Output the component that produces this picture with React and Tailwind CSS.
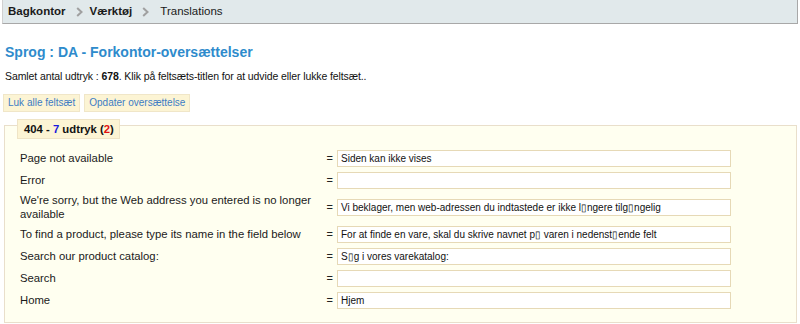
import React from "react";

const Chevron = ({ className }) => (
  <svg width="7" height="10" viewBox="0 0 7 10" className={className}>
    <polyline points="1.2,1 5.5,5 1.2,9" fill="none" stroke="#a0a0a0" strokeWidth="2" />
  </svg>
);

const rows = [
  { label: "Page not available", value: "Siden kan ikke vises" },
  { label: "Error", value: "" },
  {
    label: "We're sorry, but the Web address you entered is no longer available",
    value: "Vi beklager, men web-adressen du indtastede er ikke l\u25AFngere tilg\u25AFngelig",
    tall: true,
  },
  {
    label: "To find a product, please type its name in the field below",
    value: "For at finde en vare, skal du skrive navnet p\u25AF varen i nedenst\u25AFende felt",
  },
  { label: "Search our product catalog:", value: "S\u25AFg i vores varekatalog:" },
  { label: "Search", value: "" },
  { label: "Home", value: "Hjem" },
];

export default function App() {
  return (
    <div className="w-[800px] h-[324px] overflow-hidden bg-white font-['Liberation_Sans',Arial,sans-serif] text-[#222]">
      <div className="ml-[2px] w-[796px] h-[24px] bg-[#e1e9eb] border-l border-r border-b border-l-[#d0d0d0] border-r-[#a8a8a8] border-b-[#a8a8a8] flex items-center pl-[5px] text-[11.5px]">
        <span className="font-bold text-[#1a1a1a]">Bagkontor</span>
        <Chevron className="ml-[10px] mr-[7px]" />
        <span className="font-bold text-[#1a1a1a]">Værktøj</span>
        <Chevron className="ml-[10px] mr-[11px]" />
        <span className="text-[#1a1a1a]">Translations</span>
      </div>

      <h1 className="mt-[19px] ml-[5px] text-[14px] leading-[18px] font-bold text-[#2e8bcc]">
        Sprog : DA - Forkontor-oversættelser
      </h1>

      <p className="mt-[8px] ml-[5px] text-[10.5px] tracking-[-0.1px] leading-[14px] text-[#111]">
        Samlet antal udtryk : <b>678</b>. Klik på feltsæts-titlen for at udvide eller lukke feltsæt..
      </p>

      <div className="mt-[11px] ml-[3px] flex gap-[4px]">
        <button className="h-[18px] px-[4px] bg-[#fcf4d4] border border-[#f0e6c8] text-[10px] leading-[16px] text-[#3c7cc4]">
          Luk alle feltsæt
        </button>
        <button className="h-[18px] px-[4px] bg-[#fcf4d4] border border-[#f0e6c8] text-[10px] leading-[16px] text-[#3c7cc4]">
          Opdater oversættelse
        </button>
      </div>

      <div className="mt-[13px] ml-[4px] w-[793px] h-[198px] bg-[#fffff0] border border-[#e9dfcb]">
        <div className="ml-[12px] -mt-[7px] w-[103px] h-[20px] bg-[#fcf4d4] border border-[#efe4c6] flex items-center pl-[6px] text-[11.3px] font-bold text-[#111] whitespace-pre">
          404 - <span className="text-[#1a1adc]">7</span> udtryk (<span className="text-[#e01010]">2</span>)
        </div>
        <div className="mt-[8px] ml-[15px] flex flex-col">
          {rows.map((r, i) => (
            <div key={i} className={`flex items-center ${r.tall ? "h-[32px]" : "h-[22px]"}`}>
              <div className="w-[300px] text-[11.3px] leading-[14px] pr-[6px] text-[#1a1a1a]">{r.label}</div>
              <div className="w-[17px] text-right pr-[4px] text-[11px]">=</div>
              <div className="w-[394px] h-[17px] bg-white border border-[#e6d9b6] px-[3px] text-[10px] leading-[15px] text-[#111] whitespace-nowrap overflow-hidden">
                {r.value}
              </div>
            </div>
          ))}
        </div>
      </div>
    </div>
  );
}
